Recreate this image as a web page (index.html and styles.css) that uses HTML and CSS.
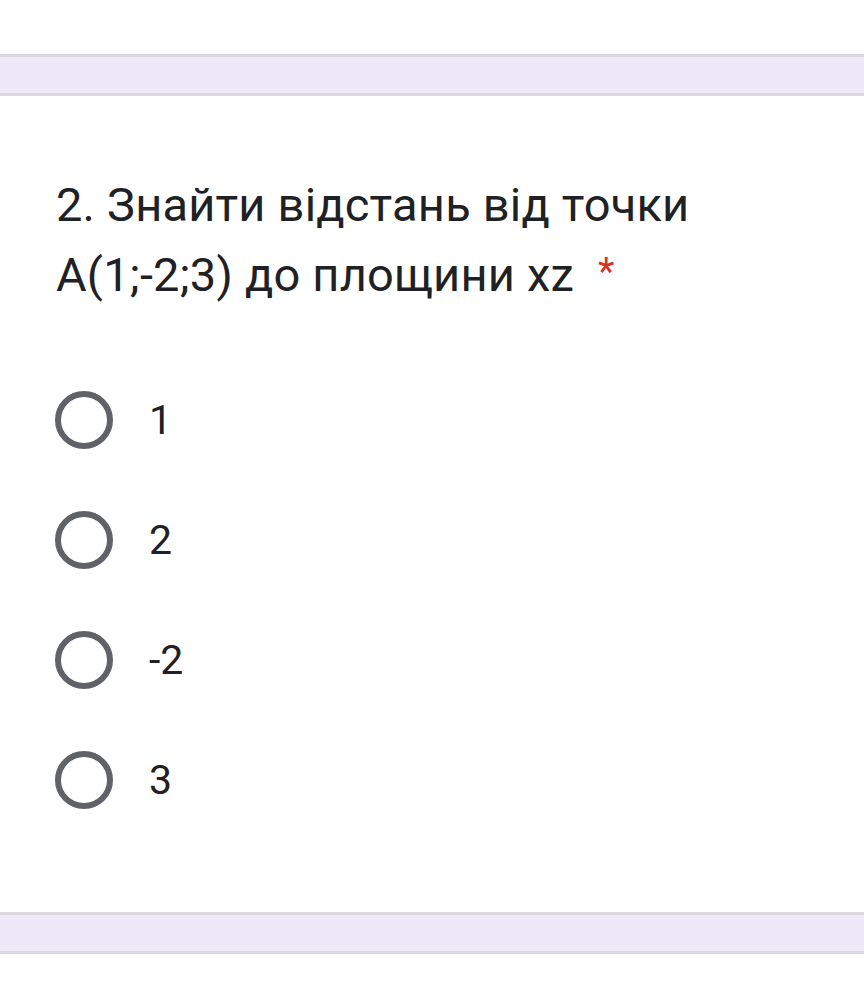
FILE: index.html
```html
<!DOCTYPE html>
<html lang="uk">
<head>
<meta charset="utf-8">
<link rel="stylesheet" href="styles.css">
</head>
<body>
<div class="top-space"></div>
<div class="band"></div>
<section class="card">
  <h2 class="question">2. Знайти відстань від точки A(1;-2;3) до площини xz<span class="req">*</span></h2>
  <ul class="options">
    <li class="option"><span class="radio"></span><span class="label">1</span></li>
    <li class="option"><span class="radio"></span><span class="label">2</span></li>
    <li class="option"><span class="radio"></span><span class="label">-2</span></li>
    <li class="option"><span class="radio"></span><span class="label">3</span></li>
  </ul>
</section>
<div class="band"></div>
</body>
</html>
```
FILE: styles.css
```css
html, body {
  margin: 0;
  padding: 0;
  background: #ffffff;
}
body {
  font-family: Roboto, "Noto Sans", Arial, sans-serif;
  color: #202124;
  width: 864px;
  overflow: hidden;
}
.top-space {
  height: 54px;
}
.band {
  height: 36px;
  background: #ede9f8;
  border-top: 3px solid #d9d7df;
  border-bottom: 3px solid #d9d7df;
}
.card {
  padding: 74px 55px 0 56px;
  height: 816px;
  box-sizing: border-box;
}
.question {
  margin: 0;
  font-size: 47px;
  font-weight: 400;
  line-height: 70px;
  width: 700px;
  letter-spacing: 0.2px;
}
.req {
  color: #d93025;
  font-size: 38px;
  line-height: 38px;
  margin-left: 24px;
  vertical-align: 6px;
}
.options {
  list-style: none;
  margin: 81px 0 0 -1px;
  padding: 0;
  display: flex;
  flex-direction: column;
  gap: 62px;
}
.option {
  display: flex;
  align-items: center;
  height: 58px;
}
.radio {
  width: 58px;
  height: 58px;
  box-sizing: border-box;
  border: 6px solid #5f6368;
  border-radius: 50%;
  flex: none;
}
.label {
  margin-left: 36px;
  font-size: 41px;
  line-height: 58px;
}
```
